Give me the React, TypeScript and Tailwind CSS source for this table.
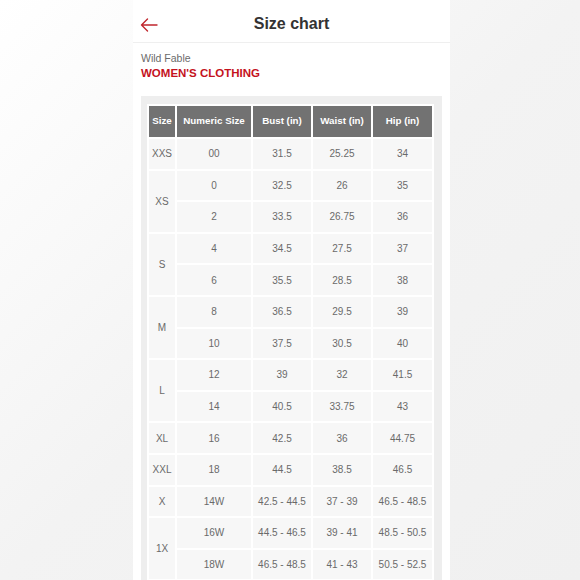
const rows: { size?: string; span?: number; num: string; bust: string; waist: string; hip: string }[] = [
  { size: 'XXS', num: '00', bust: '31.5', waist: '25.25', hip: '34' },
  { size: 'XS', span: 2, num: '0', bust: '32.5', waist: '26', hip: '35' },
  { num: '2', bust: '33.5', waist: '26.75', hip: '36' },
  { size: 'S', span: 2, num: '4', bust: '34.5', waist: '27.5', hip: '37' },
  { num: '6', bust: '35.5', waist: '28.5', hip: '38' },
  { size: 'M', span: 2, num: '8', bust: '36.5', waist: '29.5', hip: '39' },
  { num: '10', bust: '37.5', waist: '30.5', hip: '40' },
  { size: 'L', span: 2, num: '12', bust: '39', waist: '32', hip: '41.5' },
  { num: '14', bust: '40.5', waist: '33.75', hip: '43' },
  { size: 'XL', num: '16', bust: '42.5', waist: '36', hip: '44.75' },
  { size: 'XXL', num: '18', bust: '44.5', waist: '38.5', hip: '46.5' },
  { size: 'X', num: '14W', bust: '42.5 - 44.5', waist: '37 - 39', hip: '46.5 - 48.5' },
  { size: '1X', span: 2, num: '16W', bust: '44.5 - 46.5', waist: '39 - 41', hip: '48.5 - 50.5' },
  { num: '18W', bust: '46.5 - 48.5', waist: '41 - 43', hip: '50.5 - 52.5' },
];

const HEADERS = ['Size', 'Numeric Size', 'Bust (in)', 'Waist (in)', 'Hip (in)'];
const WIDTHS = ['w-[26px]', 'w-[74px]', 'w-[58px]', 'w-[58px]', 'w-[59px]'];

function BackArrow() {
  return (
    <svg width="18" height="14" viewBox="0 0 18 14" fill="none">
      <path d="M17 7H1.5M7.5 1L1.5 7l6 6" stroke="#c0262d" strokeWidth="1.4" strokeLinecap="round" strokeLinejoin="round" />
    </svg>
  );
}

export default function App() {
  return (
    <div className="w-[580px] h-[580px] overflow-hidden flex justify-center bg-gradient-to-br from-[#ffffff] via-[#f3f3f3] to-[#f0f0f0] font-['Liberation_Sans',Arial,sans-serif]">
      <div className="w-[317px] h-full bg-white ml-[3px]">
        {/* Header */}
        <div className="relative h-[43px] border-b border-[#efefef] flex items-center justify-center">
          <div className="absolute left-[7px] top-[18px]"><BackArrow /></div>
          <h1 className="text-[16px] font-bold text-[#333333] mt-[6px]">Size chart</h1>
        </div>

        <div className="px-[8px] pt-[9px]">
          <div className="text-[10.5px] leading-[13px] text-[#6b6b6b]">Wild Fable</div>
          <div className="text-[11.5px] leading-[15px] font-bold text-[#c4121d] mt-[1px]">WOMEN&apos;S CLOTHING</div>

          <div className="mt-[15px] bg-[#eeeeee] pl-[6px] pr-[7px] pt-[8px]">
            <table className="border-separate border-spacing-[2px] bg-white text-center text-[10px]">
              <thead>
                <tr>
                  {HEADERS.map((h, i) => (
                    <th key={h} className={`${WIDTHS[i]} h-[31px] bg-[#727272] text-white text-[9.8px] font-bold p-0`}>{h}</th>
                  ))}
                </tr>
              </thead>
              <tbody>
                {rows.map((r, i) => (
                  <tr key={i}>
                    {r.size && (
                      <td rowSpan={r.span ?? 1} className="bg-[#f7f7f7] text-[#6a6a6a] p-0">{r.size}</td>
                    )}
                    <td className="h-[29.6px] bg-[#f7f7f7] text-[#6a6a6a] p-0">{r.num}</td>
                    <td className="bg-[#f7f7f7] text-[#6a6a6a] p-0">{r.bust}</td>
                    <td className="bg-[#f7f7f7] text-[#6a6a6a] p-0">{r.waist}</td>
                    <td className="bg-[#f7f7f7] text-[#6a6a6a] p-0">{r.hip}</td>
                  </tr>
                ))}
              </tbody>
            </table>
          </div>
        </div>
      </div>
    </div>
  );
}
